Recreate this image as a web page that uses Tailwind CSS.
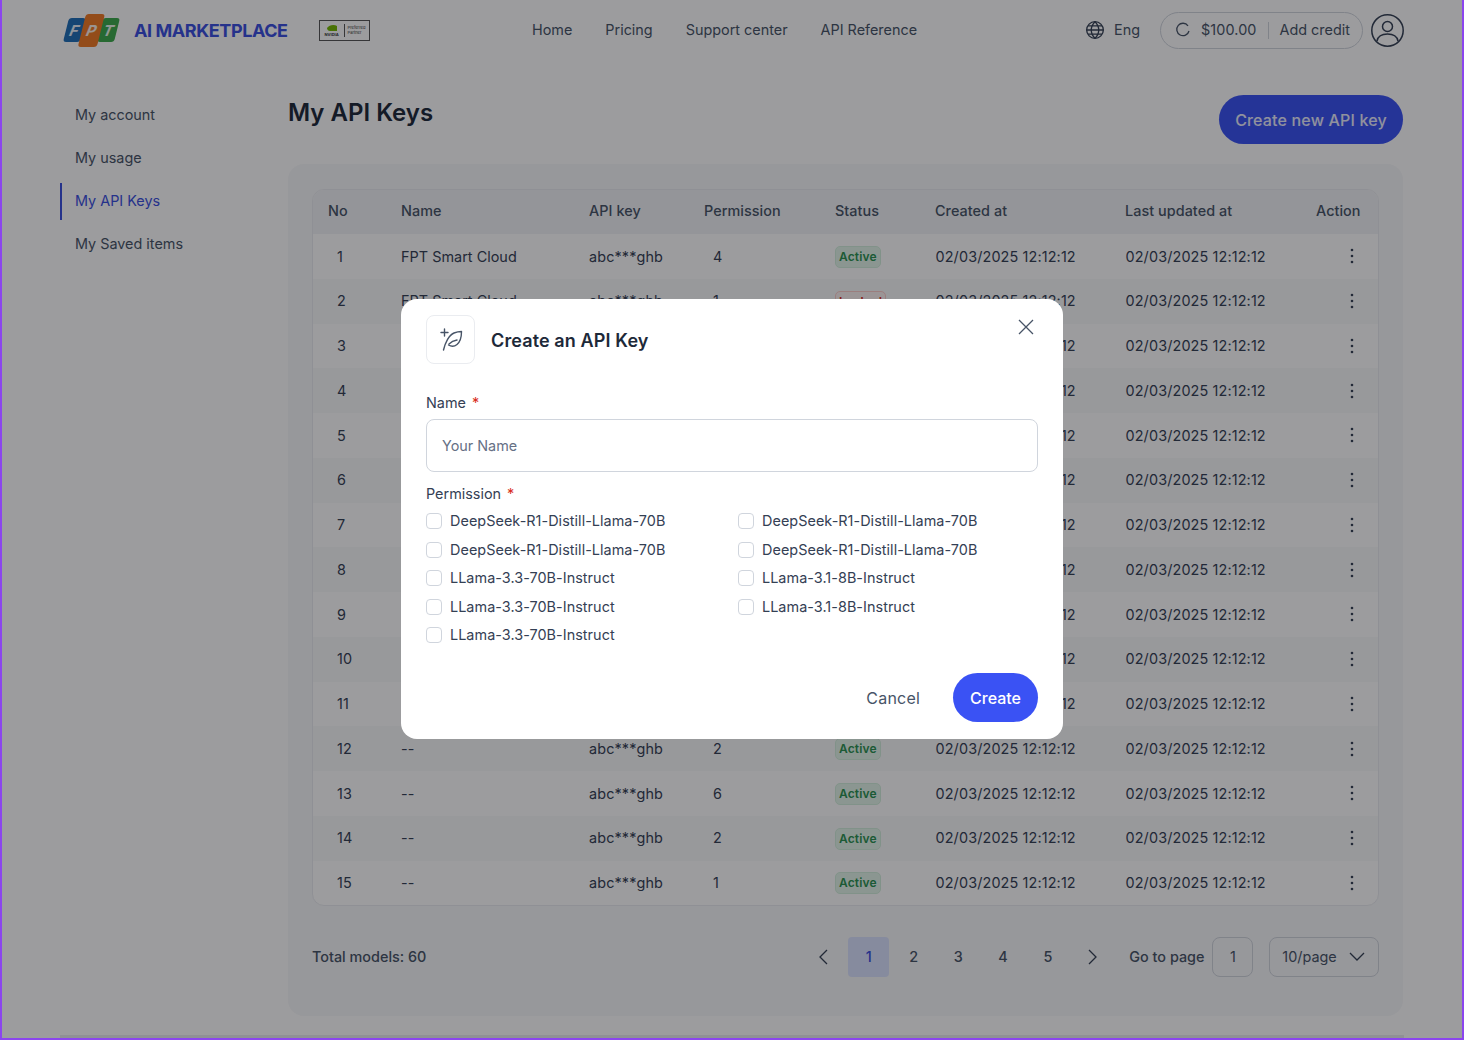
<!DOCTYPE html>
<html lang="en">
<head>
    <meta charset="UTF-8">
    <title>My API Keys</title>
    <script src="https://cdn.jsdelivr.net/npm/@tailwindcss/browser@4"></script>
</head>
<body class="bg-white font-['Inter',sans-serif]">
<div class="relative w-[1464px] h-[1040px] overflow-hidden bg-white text-[#344054]">

    <!-- Header -->
    <header class="h-[60px] flex items-center pl-[64px] pr-[60px]">
        <div class="flex items-center w-[306px]">
            <div class="flex items-center h-[34px] -skew-x-[14deg] ml-[2px] w-[51px]">
                <span class="w-[17px] h-[24px] rounded-[3px] bg-[#1f6fb8] flex items-center justify-center text-white/90 italic font-bold text-[15px] leading-none">F</span>
                <span class="w-[19px] h-[33px] -mx-px z-10 rounded-[3px] bg-[#f07a24] flex items-center justify-center text-white/90 italic font-bold text-[15px] leading-none">P</span>
                <span class="w-[17px] h-[24px] rounded-[3px] bg-[#3cab4b] flex items-center justify-center text-white/90 italic font-bold text-[15px] leading-none">T</span>
            </div>
            <span class="ml-[17px] text-[18px] font-bold text-[#3a4fe0] tracking-[-0.42px] whitespace-nowrap">AI MARKETPLACE</span>
            <div class="ml-[31px] shrink-0 w-[51px] h-[21px] border border-[#555] flex items-center text-[4px] leading-[5px] text-[#333]">
                <div class="w-[25px] border-r border-[#555] flex flex-col items-center">
                    <svg width="12" height="8" viewBox="0 0 12 8"><path d="M1 4c2-3 7-4 10-2v5H4C2 7 1 5 1 4z" fill="#76b900"/></svg>
                    <span class="font-bold">NVIDIA</span>
                </div>
                <div class="pl-[3px]">Preferred<br>Partner</div>
            </div>
        </div>
        <nav class="flex items-center gap-[33px] ml-[162px] text-[14.4px] text-[#475467]">
            <a>Home</a><a>Pricing</a><a>Support center</a><a>API Reference</a>
        </nav>
        <div class="ml-auto flex items-center">
            <svg width="20" height="20" viewBox="0 0 24 24" fill="none" stroke="#344054" stroke-width="1.6"><circle cx="12" cy="12" r="10"/><path d="M2 12h20M12 2c6 6 6 14 0 20M12 2c-6 6-6 14 0 20M3.500 7h17M3.500 17h17"/></svg>
            <span class="ml-[9px] text-[14.4px] text-[#475467]">Eng</span>
            <div class="ml-[20px] h-[37px] w-[203px] rounded-full border border-[#d0d5dd] flex items-center pl-[14px] text-[14.4px] text-[#475467]">
                <svg width="16" height="16" viewBox="0 0 16 16" fill="none" stroke="#475467" stroke-width="1.3"><path d="M13 3.800A6.200 6.200 0 1 0 14 9"/></svg>
                <span class="ml-[10px] tracking-[0.1px]">$100.00</span>
                <span class="mx-[11px] w-px h-[17px] bg-[#d0d5dd]"></span>
                <span>Add credit</span>
            </div>
            <svg class="ml-[8px]" width="33" height="33" viewBox="0 0 33 33" fill="none" stroke="#344054" stroke-width="1.5"><circle cx="16.500" cy="16.500" r="15.700"/><circle cx="16.500" cy="12.500" r="5"/><path d="M6 27c1-5 5-7 10.500-7s9.500 2 10.500 7"/></svg>
        </div>
    </header>

    <div class="flex pl-[60px] pr-[61px]">
        <!-- Sidebar -->
        <aside class="w-[228px] shrink-0 pt-[33.5px] text-[14.4px] text-[#475467]">
            <div class="h-[43px] flex items-center pl-[15px]">My account</div>
            <div class="h-[43px] flex items-center pl-[15px]">My usage</div>
            <div class="h-[37px] my-[3px] flex items-center pl-[13px] border-l-2 border-[#3a4fe0] text-[#3a4fe0]">My API Keys</div>
            <div class="h-[43px] flex items-center pl-[15px]">My Saved items</div>
        </aside>

        <!-- Main -->
        <main class="flex-1">
            <div class="h-[105px] flex justify-between items-start">
                <h1 class="mt-[36.5px] text-[24px] leading-[32px] font-semibold text-[#1d2939]">My API Keys</h1>
                <button class="mt-[35px] h-[49px] w-[184px] rounded-full bg-[#3a52f4] text-white/90 text-[16px] font-medium tracking-[0.17px]">Create new API key</button>
            </div>
            <section class="h-[852px] -mt-px rounded-[16px] bg-[#f2f4f7]/60 px-[24px] pt-[25px]">
                <div class="w-[1067px] rounded-[12px] border border-[#eaecf0] bg-white overflow-hidden">
                    <div id="table-head" class="h-[44px] pb-[3px] flex items-center bg-[#f2f4f7] text-[14.4px] font-medium text-[#475467] tracking-[0.05px]">
                        <span class="w-[88px] pl-[15px]">No</span>
                        <span class="w-[188px]">Name</span>
                        <span class="w-[115px]">API key</span>
                        <span class="w-[131px]">Permission</span>
                        <span class="w-[100px]">Status</span>
                        <span class="w-[190px]">Created at</span>
                        <span class="w-[191px]">Last updated at</span>
                        <span>Action</span>
                    </div>
                    <div id="rows"></div>
                </div>

                <!-- Pagination -->
                <div class="w-[1067px] mt-[30px] h-[41px] flex items-center whitespace-nowrap text-[14.4px] text-[#475467] [&>*]:shrink-0">
                    <span class="font-medium">Total models: 60</span>
                    <svg class="ml-[391px]" width="12" height="16" viewBox="0 0 12 16" fill="none" stroke="#344054" stroke-width="1.3"><path d="M10 1L3 8l7 7"/></svg>
                    <div class="ml-[19px] flex items-center gap-[3.75px] font-medium">
                        <span class="w-[41px] h-[40px] rounded-[4px] bg-[#dbe3ff] text-[#3a4fe0] flex items-center justify-center">1</span>
                        <span class="w-[41px] h-[40px] flex items-center justify-center">2</span>
                        <span class="w-[41px] h-[40px] flex items-center justify-center">3</span>
                        <span class="w-[41px] h-[40px] flex items-center justify-center">4</span>
                        <span class="w-[41px] h-[40px] flex items-center justify-center">5</span>
                    </div>
                    <svg class="ml-[19px]" width="12" height="16" viewBox="0 0 12 16" fill="none" stroke="#344054" stroke-width="1.3"><path d="M2 1l7 7-7 7"/></svg>
                    <span class="ml-[30px] w-[75px] font-medium">Go to page</span>
                    <span class="ml-[8px] w-[41px] h-[40px] rounded-[8px] border border-[#d0d5dd] flex items-center justify-center">1</span>
                    <div class="ml-[16px] w-[110px] h-[40px] rounded-[8px] border border-[#d0d5dd] flex items-center justify-between pl-[12px] pr-[13px]">
                        <span>10/page</span>
                        <svg width="16" height="10" viewBox="0 0 16 10" fill="none" stroke="#344054" stroke-width="1.3"><path d="M1 1l7 7 7-7"/></svg>
                    </div>
                </div>
            </section>
        </main>
    </div>

    <div class="absolute left-[60px] right-[60px] bottom-[2px] h-[3px] bg-[#eaecf0]"></div>

    <!-- Overlay + modal -->
    <div class="absolute inset-0 bg-[#07080c]/40 flex items-center justify-center pb-[2px]">
        <div class="w-[662px] h-[440px] rounded-[16px] bg-white px-[25px] pt-[16px] relative text-[#344054]">
            <div class="flex items-center h-[49px]">
                <div class="w-[49px] h-[49px] rounded-[8px] border border-[#eaecf0] flex items-center justify-center">
                    <svg width="24" height="24" viewBox="0 0 24 24" fill="none" stroke="#475467" stroke-width="1.4" stroke-linecap="round" stroke-linejoin="round">
                        <path d="M5.500 1v7M2 4.500h7"/>
                        <path d="M4.500 22C6 15 10 7 15 5C18 3.800 20 3.500 22.500 3.500C22.500 9 21 14 18 16.500C15.500 18.500 12 18.500 9.500 17"/>
                        <path d="M10 16C12 14 15 12.500 18 12"/>
                    </svg>
                </div>
                <h2 class="ml-[16px] mt-[1px] text-[18px] font-semibold text-[#1d2939] tracking-[0.12px]">Create an API Key</h2>
            </div>
            <button class="absolute top-[20px] right-[29px]">
                <svg width="16" height="16" viewBox="0 0 16 16" fill="none" stroke="#475467" stroke-width="1.3"><path d="M1 1l14 14M15 1L1 15"/></svg>
            </button>

            <label class="mt-[29px] block text-[14.4px] leading-[20px]">Name <span class="text-[#d92d20] ml-[2px]">*</span></label>
            <div class="mt-[6px] h-[53px] rounded-[8px] border border-[#d0d5dd] flex items-center pl-[15px] text-[14.4px] text-[#667085]">Your Name</div>

            <label class="mt-[12px] block text-[14.4px] leading-[20px]">Permission <span class="text-[#d92d20] ml-[2px]">*</span></label>
            <div class="mt-[3px] grid grid-cols-[312px_1fr] auto-rows-[28.500px] text-[14.4px] text-[#344054] tracking-[0.05px]">
                <div class="flex items-center gap-[8px]"><span class="w-[16px] h-[16px] rounded-[4px] border border-[#d0d5dd]"></span>DeepSeek-R1-Distill-Llama-70B</div>
                <div class="flex items-center gap-[8px]"><span class="w-[16px] h-[16px] rounded-[4px] border border-[#d0d5dd]"></span>DeepSeek-R1-Distill-Llama-70B</div>
                <div class="flex items-center gap-[8px]"><span class="w-[16px] h-[16px] rounded-[4px] border border-[#d0d5dd]"></span>DeepSeek-R1-Distill-Llama-70B</div>
                <div class="flex items-center gap-[8px]"><span class="w-[16px] h-[16px] rounded-[4px] border border-[#d0d5dd]"></span>DeepSeek-R1-Distill-Llama-70B</div>
                <div class="flex items-center gap-[8px]"><span class="w-[16px] h-[16px] rounded-[4px] border border-[#d0d5dd]"></span>LLama-3.3-70B-Instruct</div>
                <div class="flex items-center gap-[8px]"><span class="w-[16px] h-[16px] rounded-[4px] border border-[#d0d5dd]"></span>LLama-3.1-8B-Instruct</div>
                <div class="flex items-center gap-[8px]"><span class="w-[16px] h-[16px] rounded-[4px] border border-[#d0d5dd]"></span>LLama-3.3-70B-Instruct</div>
                <div class="flex items-center gap-[8px]"><span class="w-[16px] h-[16px] rounded-[4px] border border-[#d0d5dd]"></span>LLama-3.1-8B-Instruct</div>
                <div class="flex items-center gap-[8px]"><span class="w-[16px] h-[16px] rounded-[4px] border border-[#d0d5dd]"></span>LLama-3.3-70B-Instruct</div>
            </div>

            <div class="absolute right-[25px] bottom-[17px] flex items-center">
                <button class="text-[16px] text-[#475467] tracking-[0.2px] mr-[33px]">Cancel</button>
                <button class="w-[85px] h-[49px] rounded-full bg-[#3a52f4] text-white text-[16px] font-medium">Create</button>
            </div>
        </div>
    </div>

    <!-- Window frame -->
    <div class="absolute inset-0 border-x-2 border-b-2 border-[#8b45ee] pointer-events-none"></div>
</div>

<script>
    // Table rows
    const perms = [4, 1, 3, 2, 5, 2, 4, 1, 3, 6, 2, 2, 6, 2, 1];
    const rows = perms.map((p, i) => {
        const no = i + 1;
        const badge = i === 1
            ? '<span class="inline-flex h-[22px] items-center px-[3px] rounded-[5px] border border-[#fecdca] bg-[#fef3f2] text-[#d92d20] text-[12px] font-semibold">Locked</span>'
            : '<span class="inline-flex h-[22px] items-center px-[3px] rounded-[5px] border border-[#d3efdc] bg-[#e3f6ea] text-[#2a9150] text-[12px] font-semibold">Active</span>';
        const name = i < 11 ? 'FPT Smart Cloud' : '--';
        return `<div class="h-[44.75px] flex items-center text-[14.4px] text-[#344054] tracking-[0.13px] ${i % 2 ? 'bg-[#f9fafb]' : ''}">
            <span class="w-[88px] pl-[24px]">${no}</span>
            <span class="w-[188px] tracking-[0.03px]">${name}</span>
            <span class="w-[115px]">abc***ghb</span>
            <span class="w-[131px] pl-[9px]">${p}</span>
            <span class="w-[100px]">${badge}</span>
            <span class="w-[190px] pl-[0.5px]">02/03/2025 12:12:12</span>
            <span class="w-[191px] pl-[0.5px]">02/03/2025 12:12:12</span>
            <svg class="ml-[33.5px]" width="4" height="16" viewBox="0 0 4 16" fill="#344054"><circle cx="2" cy="2" r="1.300"/><circle cx="2" cy="8" r="1.300"/><circle cx="2" cy="14" r="1.300"/></svg>
        </div>`;
    });
    document.getElementById('rows').innerHTML = rows.join('');
</script>
</body>
</html>
